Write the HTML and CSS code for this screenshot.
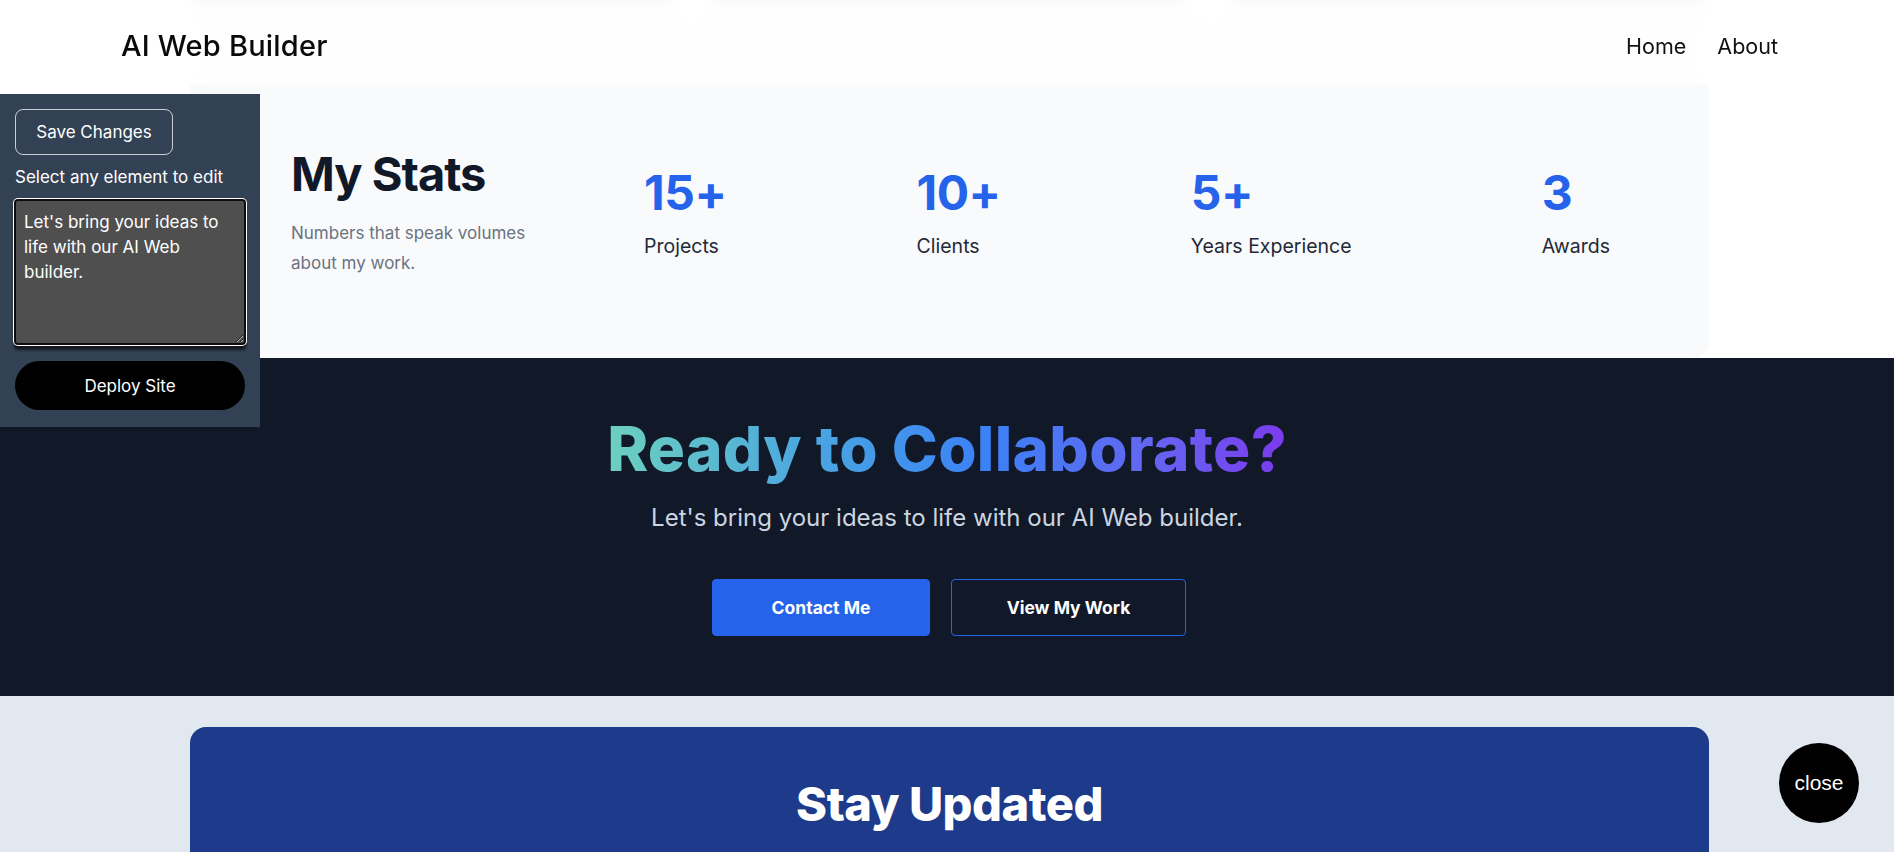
FILE: index.html
```html
<!DOCTYPE html>
<html lang="en">
<head>
<meta charset="utf-8">
<title>AI Web Builder</title>
<link rel="stylesheet" href="styles.css">
</head>
<body>
<header class="topbar">
  <div class="brand">AI Web Builder</div>
  <nav class="nav">
    <a class="nav-link" href="#">Home</a>
    <a class="nav-link" href="#">About</a>
  </nav>
</header>

<main class="page">
  <section class="projects">
    <div class="project-card"></div>
    <div class="project-card"></div>
    <div class="project-card"></div>
  </section>

  <section class="stats-wrap">
    <div class="stats-card">
      <div class="stats-intro">
        <h2 class="stats-title">My Stats</h2>
        <p class="stats-text">Numbers that speak volumes about my work.</p>
      </div>
      <div class="stats-list">
        <div class="stat"><div class="stat-num">15+</div><div class="stat-label">Projects</div></div>
        <div class="stat"><div class="stat-num">10+</div><div class="stat-label">Clients</div></div>
        <div class="stat"><div class="stat-num">5+</div><div class="stat-label">Years Experience</div></div>
        <div class="stat"><div class="stat-num">3</div><div class="stat-label">Awards</div></div>
      </div>
    </div>
  </section>

  <section class="cta">
    <h2 class="cta-title">Ready to Collaborate?</h2>
    <p class="cta-text">Let's bring your ideas to life with our AI Web builder.</p>
    <div class="cta-actions">
      <a class="btn btn-primary" href="#">Contact Me</a>
      <a class="btn btn-outline" href="#">View My Work</a>
    </div>
  </section>

  <section class="newsletter">
    <div class="news-card">
      <h2 class="news-title">Stay Updated</h2>
    </div>
  </section>
</main>

<aside class="editor">
  <button class="save-btn" type="button">Save Changes</button>
  <div class="editor-label">Select any element to edit</div>
  <textarea class="editor-text">Let's bring your ideas to life with our AI Web builder.</textarea>
  <button class="deploy-btn" type="button">Deploy Site</button>
</aside>

<button class="close-btn" type="button">close</button>
</body>
</html>
```

FILE: styles.css
```css
* { box-sizing: border-box; }

html, body { margin: 0; padding: 0; }

body {
  font-family: Inter, "Noto Sans", "DejaVu Sans", sans-serif;
  background: #ffffff;
  color: #111827;
  overflow: hidden;
}

/* ---------- header ---------- */
.topbar {
  position: fixed;
  top: 0;
  left: 0;
  right: 0;
  height: 85px;
  z-index: 20;
  display: flex;
  align-items: center;
  justify-content: space-between;
  padding: 6px 116px 0 121px;
  background: rgba(255, 255, 255, 0.82);
  backdrop-filter: blur(10px);
}

.brand {
  font-size: 29px;
  font-weight: 500;
  color: #0a0a0a;
  letter-spacing: 0.2px;
}

.nav { display: flex; gap: 31px; }

.nav-link {
  font-size: 21.5px;
  color: #111111;
  text-decoration: none;
}

/* ---------- top project cards (scrolled away) ---------- */
.projects {
  margin: -200px 185px 0 190px;
  display: grid;
  grid-template-columns: repeat(3, 1fr);
  gap: 36px;
}

.project-card {
  height: 200px;
  background: #ffffff;
  border-radius: 12px;
  box-shadow: 0 5px 8px -1px rgba(0, 0, 0, 0.22), 0 2px 4px -2px rgba(0, 0, 0, 0.15);
}

/* ---------- stats ---------- */
.stats-wrap {
  padding-top: 12px;
  background: #ffffff;
}

.stats-card {
  margin: 0 185px 0 190px;
  height: 346px;
  padding: 54px 99px 0 101px;
  background: #f8fafc;
  border-radius: 0 0 16px 16px;
  display: flex;
  align-items: center;
}

.stats-intro { flex: 0 0 353px; }

.stats-title {
  margin: 0;
  font-size: 47px;
  line-height: 1.2;
  font-weight: 700;
  color: #111827;
  letter-spacing: -1px;
}

.stats-text {
  margin: 15px 0 0;
  max-width: 250px;
  font-size: 17px;
  line-height: 30px;
  color: #6b7280;
}

.stats-list {
  flex: 1;
  display: flex;
  justify-content: space-between;
}

.stat-num {
  font-size: 48px;
  line-height: 1.2;
  font-weight: 700;
  color: #2563eb;
  letter-spacing: -0.5px;
}

.stat-label {
  margin-top: 10px;
  font-size: 19.5px;
  line-height: 28px;
  color: #1f2937;
}

/* ---------- call to action ---------- */
.cta {
  height: 338px;
  padding-top: 55px;
  background: #111827;
  text-align: center;
}

.cta-title {
  display: inline-block;
  margin: 0;
  font-size: 62px;
  line-height: 72px;
  font-weight: 800;
  letter-spacing: 0.3px;
  background: linear-gradient(90deg, #6dd0bf 0%, #4aa6e0 30%, #3b82f6 55%, #6366f1 80%, #7c3aed 100%);
  -webkit-background-clip: text;
  background-clip: text;
  color: transparent;
}

.cta-text {
  margin: 17px 0 0;
  font-size: 24px;
  line-height: 32px;
  color: #cbd5e1;
}

.cta-actions {
  margin-top: 45px;
  display: flex;
  justify-content: center;
  gap: 21px;
  padding-left: 4px;
}

.btn {
  display: inline-flex;
  align-items: center;
  justify-content: center;
  height: 57px;
  padding: 0;
  border-radius: 4px;
  font-size: 17.5px;
  font-weight: 700;
  color: #ffffff;
  text-decoration: none;
  border: 1px solid #2563eb;
}

.btn-primary { background: #2563eb; width: 218px; }
.btn-outline { background: transparent; width: 235px; }

/* ---------- newsletter ---------- */
.newsletter {
  padding: 31px 0 60px;
  background: #e2e8f0;
}

.news-card {
  margin: 0 185px 0 190px;
  padding: 49px 0 120px;
  background: #1e3a8a;
  border-radius: 16px;
  text-align: center;
}

.news-title {
  margin: 0;
  font-size: 47px;
  line-height: 1.2;
  font-weight: 800;
  color: #ffffff;
  letter-spacing: -0.5px;
}

/* ---------- editor panel (overlay) ---------- */
.editor {
  position: fixed;
  top: 94px;
  left: 0;
  width: 260px;
  height: 333px;
  z-index: 30;
  padding: 15px;
  background: #334155;
  display: flex;
  flex-direction: column;
  align-items: flex-start;
}

.save-btn {
  width: 158px;
  height: 46px;
  border: 1px solid rgba(255, 255, 255, 0.75);
  border-radius: 8px;
  background: transparent;
  color: #ffffff;
  font-family: inherit;
  font-size: 17px;
}

.editor-label {
  margin-top: 10px;
  font-size: 17px;
  line-height: 25px;
  color: #ffffff;
}

.editor-text {
  margin: 9px 0 0 -1px;
  width: 232px;
  height: 146px;
  padding: 9px 8px 7px;
  border: 2px solid #0d0d0d;
  border-radius: 4px;
  outline: none;
  box-shadow: 0 0 0 1px #ffffff, 0 5px 3px rgba(0, 0, 0, 0.65);
  background: #4f4f4f;
  color: #ffffff;
  font-family: inherit;
  font-size: 17px;
  line-height: 25px;
  resize: both;
}

.deploy-btn {
  margin-top: 16px;
  width: 230px;
  height: 49px;
  border: none;
  border-radius: 25px;
  background: #000000;
  color: #ffffff;
  font-family: inherit;
  font-size: 17px;
}

/* ---------- close bubble ---------- */
.close-btn {
  position: fixed;
  right: 35px;
  bottom: 29px;
  width: 80px;
  height: 80px;
  z-index: 30;
  border: none;
  border-radius: 50%;
  background: #000000;
  color: #ffffff;
  font-family: "Liberation Sans", Arial, sans-serif;
  font-size: 21px;
}
```
